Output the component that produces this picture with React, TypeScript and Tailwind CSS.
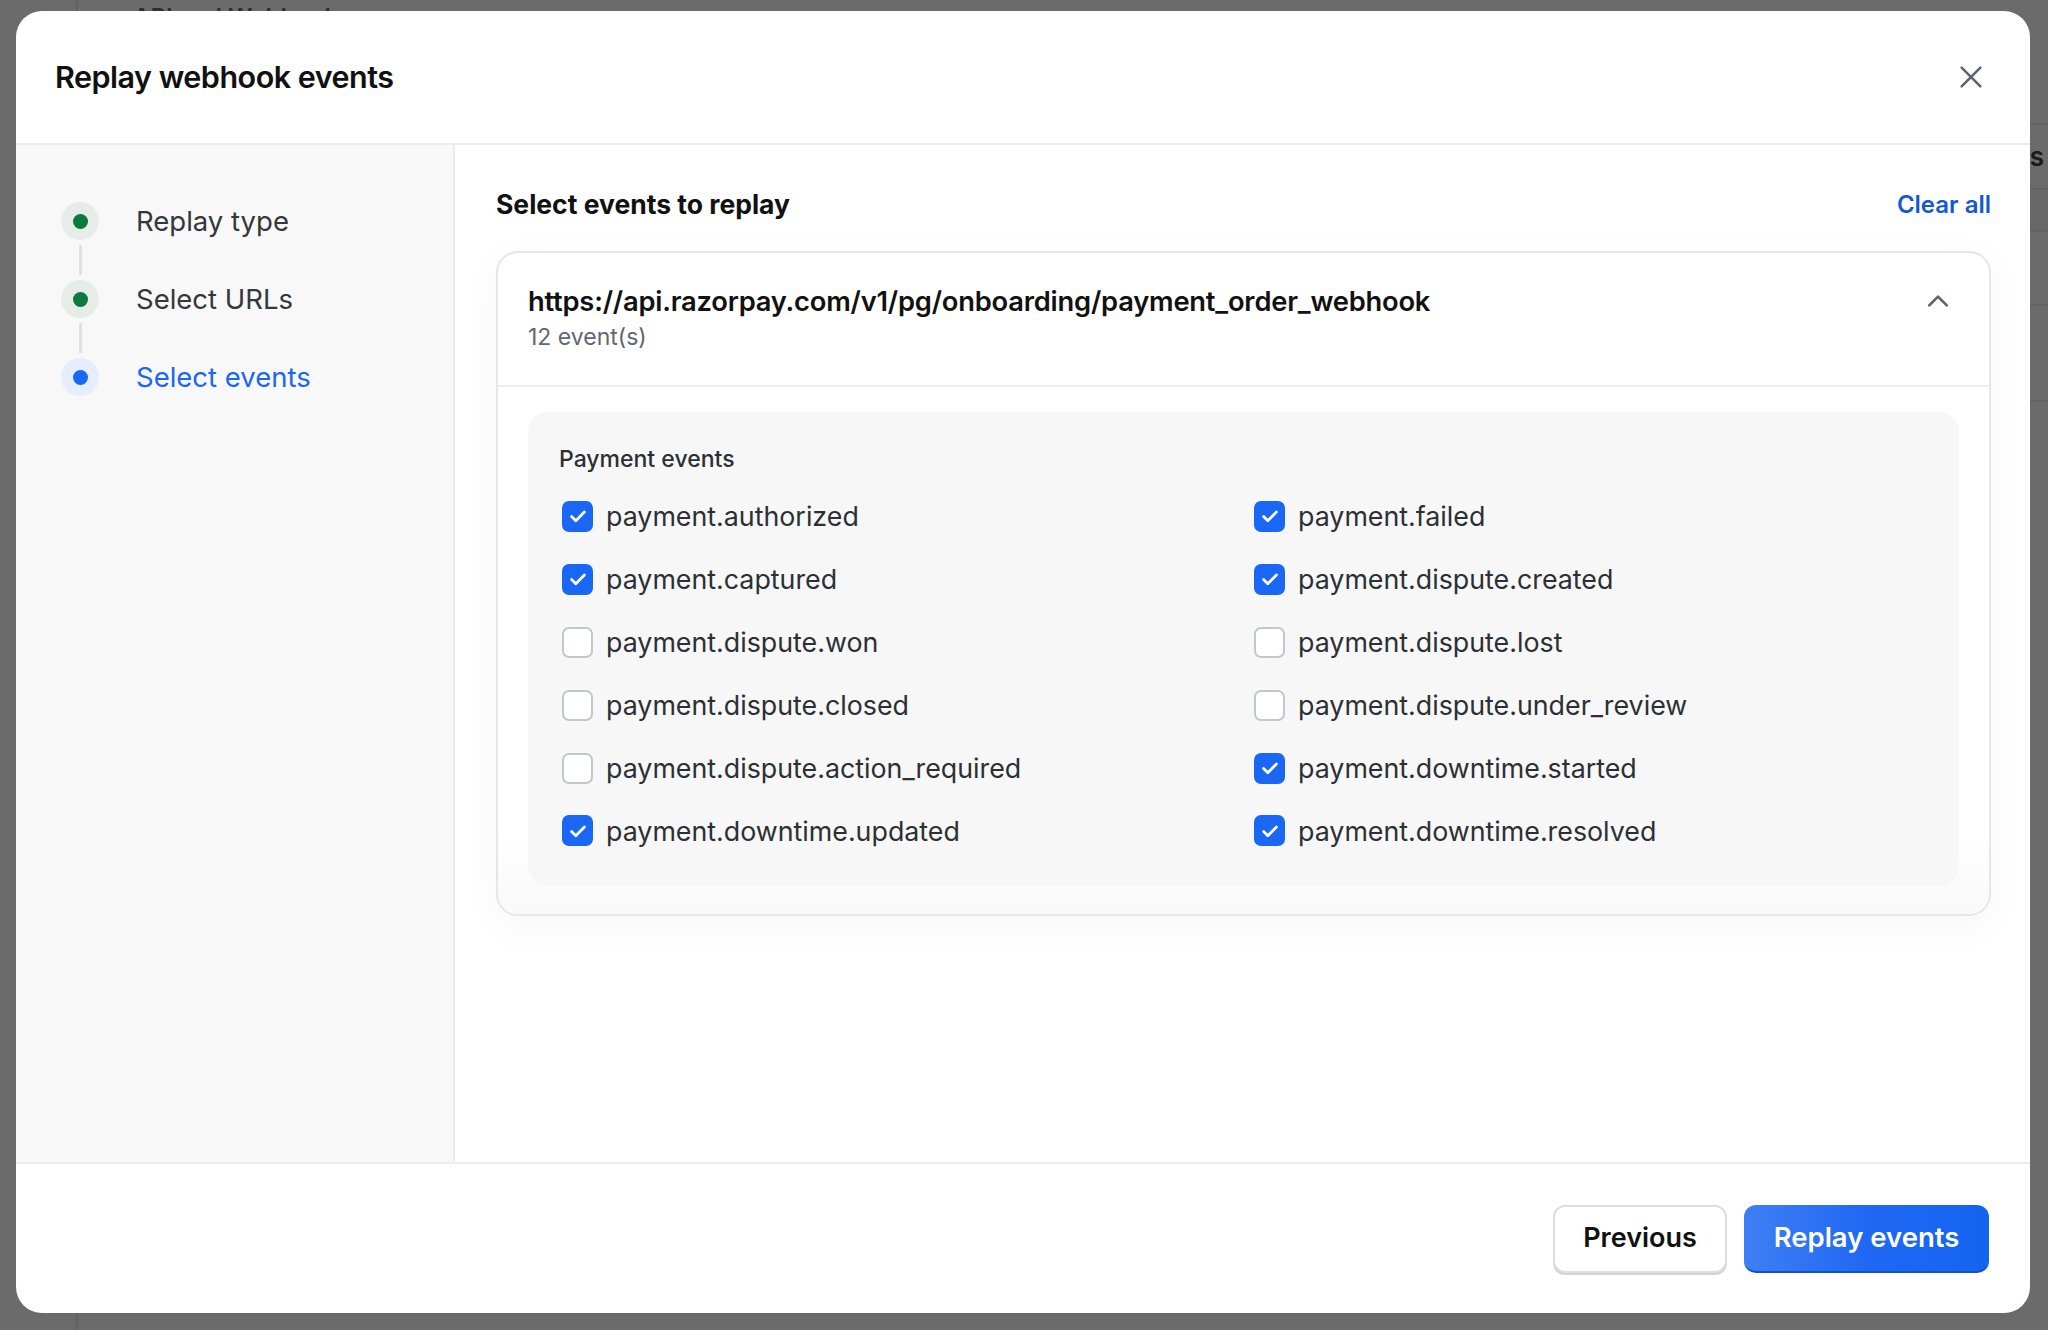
import { useState } from "react";

type EventItem = { name: string; checked: boolean };

const steps = [
	{ label: "Replay type", state: "done" },
	{ label: "Select URLs", state: "done" },
	{ label: "Select events", state: "active" },
];

const initialEvents: EventItem[] = [
	{ name: "payment.authorized", checked: true },
	{ name: "payment.failed", checked: true },
	{ name: "payment.captured", checked: true },
	{ name: "payment.dispute.created", checked: true },
	{ name: "payment.dispute.won", checked: false },
	{ name: "payment.dispute.lost", checked: false },
	{ name: "payment.dispute.closed", checked: false },
	{ name: "payment.dispute.under_review", checked: false },
	{ name: "payment.dispute.action_required", checked: false },
	{ name: "payment.downtime.started", checked: true },
	{ name: "payment.downtime.updated", checked: true },
	{ name: "payment.downtime.resolved", checked: true },
];

const Checkbox = ({ checked }: { checked: boolean }) =>
	checked ? (
		<span className="flex size-[31px] items-center justify-center rounded-[7px] bg-[#1a66f5]">
			<svg width="22" height="22" viewBox="0 0 24 24" fill="none">
				<path
					d="M5 12.5l4.6 4.6L19 7.6"
					stroke="white"
					strokeWidth="3"
					strokeLinecap="round"
					strokeLinejoin="round"
				/>
			</svg>
		</span>
	) : (
		<span className="size-[31px] rounded-[7px] border-2 border-[#c3c7cc] bg-white" />
	);

// underlying page, dimmed by the overlay
const BackgroundPage = () => (
	<div className="flex h-screen w-full bg-[#6b6b6b]">
		<div className="w-[78px] border-r-2 border-[#616161]" />
		<div className="flex flex-1 flex-col">
			<div className="h-[11px] pl-[55px] pt-[6px]">
				<span className="text-[24px] font-semibold leading-none text-[#2e2e2e]">
					API and Webhooks
				</span>
			</div>
			<div className="mt-[112px] flex flex-col">
				<div className="h-[67px] border-y-2 border-[#626262] pr-[4px] text-right">
					<span className="text-[26px] font-semibold leading-[64px] text-[#1a1a1a]">
						Actions
					</span>
				</div>
				<div className="h-[42px] border-b-2 border-[#626262] bg-[#686868]" />
				<div className="h-[74px] border-b-2 border-[#626262]" />
				<div className="h-[96px] border-b-2 border-[#626262]" />
			</div>
		</div>
	</div>
);

export default function App() {
	const [events, setEvents] = useState(initialEvents);

	const toggle = (i: number) =>
		setEvents((prev) =>
			prev.map((e, idx) => (idx === i ? { ...e, checked: !e.checked } : e)),
		);

	return (
		<div
			className="relative h-screen w-full overflow-hidden"
			style={{ fontFamily: "Inter, 'Noto Sans', sans-serif" }}
		>
			<BackgroundPage />

			{/* Modal */}
			<div className="absolute left-[16px] top-[11px] flex h-[1302px] w-[2014px] flex-col overflow-hidden rounded-[26px] bg-white">
				{/* Header */}
				<div className="flex h-[134px] shrink-0 items-center justify-between border-b-2 border-[#ececec] pl-[39px] pr-[44px]">
					<h1 className="text-[30.5px] font-semibold tracking-[-0.5px] text-[#111]">
						Replay webhook events
					</h1>
					<button className="flex size-[30px] items-center justify-center text-[#5d6670]">
						<svg width="30" height="30" viewBox="0 0 24 24" fill="none">
							<path
								d="M4.5 4.5l15 15M19.5 4.5l-15 15"
								stroke="currentColor"
								strokeWidth="2"
								strokeLinecap="round"
							/>
						</svg>
					</button>
				</div>

				{/* Body */}
				<div className="flex flex-1">
					{/* Steps */}
					<div className="w-[439px] shrink-0 border-r-2 border-[#ebebeb] bg-[#f8f8f8] pl-[45px] pt-[57px]">
						{steps.map((s, i) => (
							<div key={s.label}>
								<div className="flex h-[38px] items-center gap-[37px]">
									<span
										className={
											s.state === "active"
												? "flex size-[38px] items-center justify-center rounded-full bg-[#e6edfd]"
												: "flex size-[38px] items-center justify-center rounded-full bg-[#e6ede9]"
										}
									>
										<span
											className={
												s.state === "active"
													? "size-[15px] rounded-full bg-[#1a66f5]"
													: "size-[15px] rounded-full bg-[#0a7a3d]"
											}
										/>
									</span>
									<span
										className={
											s.state === "active"
												? "text-[27.5px] leading-[38px] text-[#1a66f5]"
												: "text-[27.5px] leading-[38px] text-[#33383d]"
										}
									>
										{s.label}
									</span>
								</div>
								{i < steps.length - 1 && (
									<div className="flex h-[40px] w-[38px] justify-center py-[5px]">
										<span className="w-[3px] bg-[#e0e0e0]" />
									</div>
								)}
							</div>
						))}
					</div>

					{/* Main */}
					<div className="flex-1 pl-[41px] pr-[39px] pt-[44px]">
						<div className="flex h-[32px] items-center justify-between">
							<h2 className="text-[26.5px] font-bold text-[#111]">
								Select events to replay
							</h2>
							<button className="text-[24px] font-semibold text-[#1358d6]">
								Clear all
							</button>
						</div>

						<div className="mt-[30px] rounded-[22px] border-2 border-[#e6e6e6] bg-white shadow-[0_10px_40px_rgba(0,0,0,0.04)]">
							<div className="flex justify-between border-b-2 border-[#efefef] pb-[33px] pl-[30px] pr-[36px] pt-[32px]">
								<div className="flex flex-col">
									<span className="text-[27.3px] font-semibold leading-[34px] tracking-[-0.2px] text-[#111]">
										https://api.razorpay.com/v1/pg/onboarding/payment_order_webhook
									</span>
									<span className="mt-[3px] text-[23px] leading-[30px] text-[#5f6770]">
										12 event(s)
									</span>
								</div>
								<svg
									width="30"
									height="30"
									viewBox="0 0 24 24"
									fill="none"
									className="mt-[1px] text-[#5d6670]"
								>
									<path
										d="M5 15.5l7-7 7 7"
										stroke="currentColor"
										strokeWidth="2.2"
										strokeLinecap="round"
										strokeLinejoin="round"
									/>
								</svg>
							</div>

							<div className="rounded-b-[22px] bg-gradient-to-b from-white from-85% to-[#f9f9f9] px-[30px] pb-[28px] pt-[25px]">
								<div className="rounded-[20px] bg-[#f7f7f7] pb-[24px] pl-[31px] pr-[12px] pt-[32px]">
									<div className="text-[23px] font-medium leading-[30px] text-[#2b3035]">
										Payment events
									</div>
									<div className="mt-[11px] grid grid-cols-[692px_1fr]">
										{events.map((e, i) => (
											<label
												key={e.name}
												onClick={() => toggle(i)}
												className="flex h-[62.9px] cursor-pointer items-center gap-[13px] pl-[3px]"
											>
												<Checkbox checked={e.checked} />
												<span className="text-[26.8px] text-[#2b3035]">
													{e.name}
												</span>
											</label>
										))}
									</div>
								</div>
							</div>
						</div>
					</div>
				</div>

				{/* Footer */}
				<div className="flex h-[151px] shrink-0 items-center justify-end gap-[17px] border-t-2 border-[#ececec] pr-[41px]">
					<button className="h-[68px] w-[174px] rounded-[12px] border-2 border-[#dedede] bg-white text-[27px] font-semibold text-[#111] shadow-[0_2px_0_#d2d2d2]">
						Previous
					</button>
					<button className="h-[68px] w-[245px] rounded-[12px] border-b-2 border-[#0f52c9] bg-gradient-to-r from-[#3f7ff5] via-[#1f68f3] to-[#1464f0] text-[27.5px] font-semibold text-white">
						Replay events
					</button>
				</div>
			</div>
		</div>
	);
}
